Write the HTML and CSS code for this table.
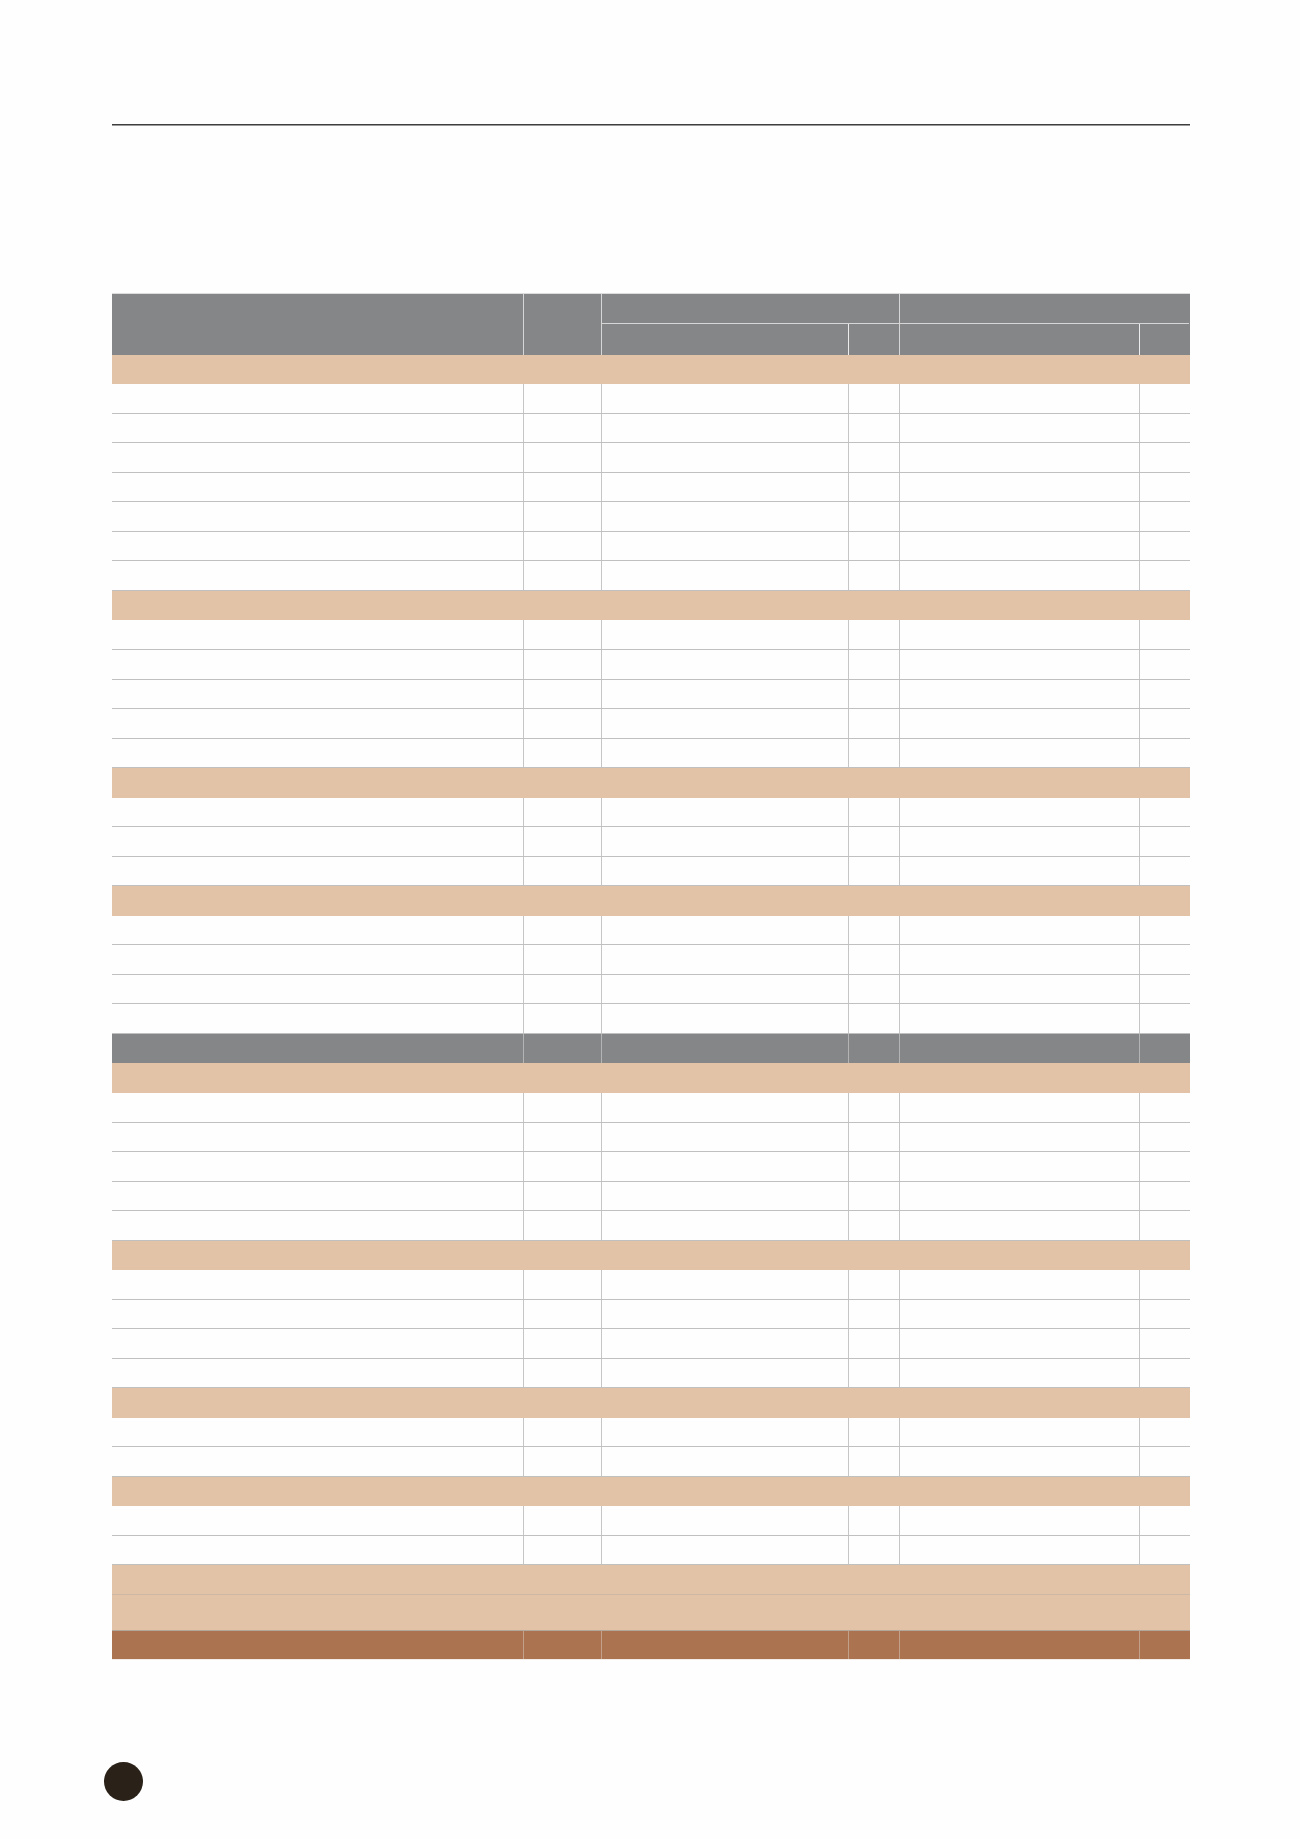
FILE: index.html
```html
<!DOCTYPE html>
<html lang="en">
<head>
<meta charset="utf-8">
<title>Table</title>
<link rel="stylesheet" href="styles.css">
</head>
<body>
<div class="page">
  <div class="rule"></div>
  <div class="table">
    <div class="thead">
      <div class="h h-a"></div>
      <div class="h h-b"></div>
      <div class="h h-c"></div>
      <div class="h h-d"></div>
      <div class="h h-e"></div>
      <div class="h h-f"></div>
      <div class="h h-g"></div>
      <div class="h h-h"></div>
    </div>
    <div class="tbody">
      <div class="row sec"></div>
      <div class="row data"><span></span><span></span><span></span><span></span><span></span><span></span></div>
      <div class="row data"><span></span><span></span><span></span><span></span><span></span><span></span></div>
      <div class="row data"><span></span><span></span><span></span><span></span><span></span><span></span></div>
      <div class="row data"><span></span><span></span><span></span><span></span><span></span><span></span></div>
      <div class="row data"><span></span><span></span><span></span><span></span><span></span><span></span></div>
      <div class="row data"><span></span><span></span><span></span><span></span><span></span><span></span></div>
      <div class="row data"><span></span><span></span><span></span><span></span><span></span><span></span></div>
      <div class="row sec"></div>
      <div class="row data"><span></span><span></span><span></span><span></span><span></span><span></span></div>
      <div class="row data"><span></span><span></span><span></span><span></span><span></span><span></span></div>
      <div class="row data"><span></span><span></span><span></span><span></span><span></span><span></span></div>
      <div class="row data"><span></span><span></span><span></span><span></span><span></span><span></span></div>
      <div class="row data"><span></span><span></span><span></span><span></span><span></span><span></span></div>
      <div class="row sec"></div>
      <div class="row data"><span></span><span></span><span></span><span></span><span></span><span></span></div>
      <div class="row data"><span></span><span></span><span></span><span></span><span></span><span></span></div>
      <div class="row data"><span></span><span></span><span></span><span></span><span></span><span></span></div>
      <div class="row sec"></div>
      <div class="row data"><span></span><span></span><span></span><span></span><span></span><span></span></div>
      <div class="row data"><span></span><span></span><span></span><span></span><span></span><span></span></div>
      <div class="row data"><span></span><span></span><span></span><span></span><span></span><span></span></div>
      <div class="row data"><span></span><span></span><span></span><span></span><span></span><span></span></div>
      <div class="row gray"><span></span><span></span><span></span><span></span><span></span><span></span></div>
      <div class="row sec"></div>
      <div class="row data"><span></span><span></span><span></span><span></span><span></span><span></span></div>
      <div class="row data"><span></span><span></span><span></span><span></span><span></span><span></span></div>
      <div class="row data"><span></span><span></span><span></span><span></span><span></span><span></span></div>
      <div class="row data"><span></span><span></span><span></span><span></span><span></span><span></span></div>
      <div class="row data"><span></span><span></span><span></span><span></span><span></span><span></span></div>
      <div class="row sec"></div>
      <div class="row data"><span></span><span></span><span></span><span></span><span></span><span></span></div>
      <div class="row data"><span></span><span></span><span></span><span></span><span></span><span></span></div>
      <div class="row data"><span></span><span></span><span></span><span></span><span></span><span></span></div>
      <div class="row data"><span></span><span></span><span></span><span></span><span></span><span></span></div>
      <div class="row sec"></div>
      <div class="row data"><span></span><span></span><span></span><span></span><span></span><span></span></div>
      <div class="row data"><span></span><span></span><span></span><span></span><span></span><span></span></div>
      <div class="row sec"></div>
      <div class="row data"><span></span><span></span><span></span><span></span><span></span><span></span></div>
      <div class="row data"><span></span><span></span><span></span><span></span><span></span><span></span></div>
      <div class="row sum1"></div>
      <div class="row sum2"></div>
      <div class="row brown"><span></span><span></span><span></span><span></span><span></span><span></span></div>
    </div>
  </div>
  <div class="pagenum"></div>
</div>
</body>
</html>
```

FILE: styles.css
```css
html, body {
  margin: 0;
  padding: 0;
  background: #fefefe;
  font-family: "Liberation Sans", Arial, sans-serif;
}

.page {
  width: 1300px;
  padding: 124px 0 0 112px;
  box-sizing: border-box;
}

.rule {
  width: 1077.5px;
  height: 1px;
  background: #3e3e3e;
  box-shadow: 0 1px 0 #9a9a9a;
}

.table {
  width: 1077.5px;
  margin-top: 168px;
  border-top: 1px solid #dcdcdc;
}

.thead {
  display: grid;
  grid-template-columns: 410.7px 78px 247.6px 50.7px 240px 50.5px;
  grid-template-rows: 30.4px 30.3px;
  background: #858688;
}

.h {
  box-sizing: border-box;
}

.h-a { grid-column: 1; grid-row: 1 / span 2; }
.h-b { grid-column: 2; grid-row: 1 / span 2; border-left: 1px solid #d6d6d6; }
.h-c { grid-column: 3 / span 2; grid-row: 1; border-left: 1px solid #d6d6d6; border-bottom: 1px solid #d6d6d6; }
.h-d { grid-column: 5 / span 2; grid-row: 1; border-left: 1px solid #d6d6d6; border-bottom: 1px solid #d6d6d6; }
.h-e { grid-column: 3; grid-row: 2; border-left: 1px solid #d6d6d6; }
.h-f { grid-column: 4; grid-row: 2; border-left: 1px solid #ececec; }
.h-g { grid-column: 5; grid-row: 2; border-left: 1px solid #d6d6d6; }
.h-h { grid-column: 6; grid-row: 2; border-left: 1px solid #ececec; }

.row {
  box-sizing: border-box;
  height: 29.54px;
  display: grid;
  grid-template-columns: 410.7px 78px 247.6px 50.7px 240px 50.5px;
}

.row span {
  display: block;
  box-sizing: border-box;
}

.row span + span {
  border-left: 1px solid #c6c6c6;
}

.sec {
  background: #e2c3a8;
}

.data {
  background: #fefefe;
  border-bottom: 1px solid #c0c0c0;
}

.gray {
  background: #858688;
}

.gray span + span {
  border-left-color: #b4b4b4;
}

.sum1 {
  background: #e2c3a8;
  border-bottom: 1px solid #cdb8a6;
}

.sum2 {
  background: #e2c3a8;
  height: 36px;
  border-bottom: 1px solid #b3a69b;
}

.brown {
  background: #ab734f;
  height: 29.3px;
  border-bottom: 1px solid #f2ebe6;
}

.brown span + span {
  border-left-color: #c3a08a;
}

.pagenum {
  width: 39px;
  height: 39px;
  border-radius: 50%;
  background: #2a2218;
  margin: 102px 0 0 -8px;
}
```
